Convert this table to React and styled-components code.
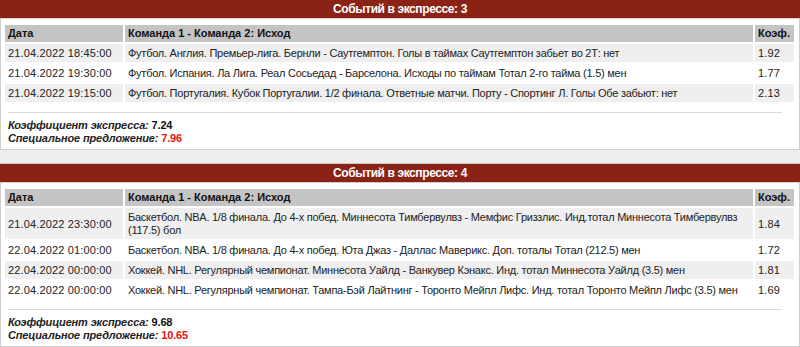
import React from 'react';
import styled, { createGlobalStyle } from 'styled-components';

const GlobalStyle = createGlobalStyle`
  html, body {
    margin: 0;
    padding: 0;
    background: #efefef;
  }
  body {
    font-family: "Liberation Sans", Arial, sans-serif;
    font-size: 11px;
    color: #222;
  }
`;

const Page = styled.div`
  width: 800px;
  display: flex;
  flex-direction: column;
  gap: 13px;
`;

const Block = styled.section`
  display: flex;
  flex-direction: column;
`;

const TitleBar = styled.div`
  height: 18px;
  line-height: 18px;
  background: #8a2315;
  color: #fff;
  font-weight: bold;
  font-size: 12px;
  letter-spacing: -0.4px;
  text-align: center;
  border-top: ${(p) => (p.$first ? 'none' : '1px solid #c8c8c8')};
`;

const Panel = styled.div`
  background: #fff;
  border: 1px solid #cfcfcf;
  padding: 4px 3px 4px 2px;
`;

const Table = styled.table`
  width: 100%;
  border-collapse: separate;
  border-spacing: 2px;
`;

const Th = styled.th`
  background: #c4c4c4;
  color: #111;
  font-weight: bold;
  text-align: left;
  padding: 2px 3px;
  line-height: 13px;
  width: ${(p) => p.$w || 'auto'};
`;

const Row = styled.tr`
  background: ${(p) => (p.$alt ? '#efefef' : '#fff')};
`;

const Td = styled.td`
  padding: 3px 3px 2px;
  line-height: 13px;
  vertical-align: middle;
  letter-spacing: ${(p) => (p.$text ? '-0.25px' : '0.15px')};
`;

const Rule = styled.div`
  height: 1px;
  background: #dcdcdc;
  margin: 8px 14px 6px 5px;
`;

const Summary = styled.div`
  padding-left: 5px;
  line-height: 13px;
  letter-spacing: -0.15px;
`;

const Label = styled.span`
  font-weight: bold;
  font-style: italic;
`;

const Value = styled.span`
  font-weight: bold;
  color: ${(p) => (p.$red ? '#e8120c' : '#111')};
`;

const expresses = [
  {
    count: 3,
    coef: '7.24',
    special: '7.96',
    events: [
      ['21.04.2022 18:45:00', 'Футбол. Англия. Премьер-лига. Бернли - Саутгемптон. Голы в таймах Саутгемптон забьет во 2Т: нет', '1.92'],
      ['21.04.2022 19:30:00', 'Футбол. Испания. Ла Лига. Реал Сосьедад - Барселона. Исходы по таймам Тотал 2-го тайма (1.5) мен', '1.77'],
      ['21.04.2022 19:15:00', 'Футбол. Португалия. Кубок Португалии. 1/2 финала. Ответные матчи. Порту - Спортинг Л. Голы Обе забьют: нет', '2.13'],
    ],
  },
  {
    count: 4,
    coef: '9.68',
    special: '10.65',
    events: [
      ['21.04.2022 23:30:00', 'Баскетбол. NBA. 1/8 финала. До 4-х побед. Миннесота Тимбервулвз - Мемфис Гриззлис. Инд.тотал Миннесота Тимбервулвз (117.5) бол', '1.84'],
      ['22.04.2022 01:00:00', 'Баскетбол. NBA. 1/8 финала. До 4-х побед. Юта Джаз - Даллас Маверикс. Доп. тоталы Тотал (212.5) мен', '1.72'],
      ['22.04.2022 00:00:00', 'Хоккей. NHL. Регулярный чемпионат. Миннесота Уайлд - Ванкувер Кэнакс. Инд. тотал Миннесота Уайлд (3.5) мен', '1.81'],
      ['22.04.2022 00:00:00', 'Хоккей. NHL. Регулярный чемпионат. Тампа-Бэй Лайтнинг - Торонто Мейпл Лифс. Инд. тотал Торонто Мейпл Лифс (3.5) мен', '1.69'],
    ],
  },
];

const Express = ({ data, first }) => (
  <Block>
    <TitleBar $first={first}>Событий в экспрессе: {data.count}</TitleBar>
    <Panel>
      <Table>
        <thead>
          <tr>
            <Th $w="112px">Дата</Th>
            <Th>Команда 1 - Команда 2: Исход</Th>
            <Th $w="33px">Коэф.</Th>
          </tr>
        </thead>
        <tbody>
          {data.events.map((e, i) => (
            <Row key={i} $alt={i % 2 === 0}>
              <Td>{e[0]}</Td>
              <Td $text>{e[1]}</Td>
              <Td>{e[2]}</Td>
            </Row>
          ))}
        </tbody>
      </Table>
      <Rule />
      <Summary>
        <Label>Коэффициент экспресса:</Label> <Value>{data.coef}</Value>
        <br />
        <Label>Специальное предложение:</Label> <Value $red>{data.special}</Value>
      </Summary>
    </Panel>
  </Block>
);

export default function App() {
  return (
    <>
      <GlobalStyle />
      <Page>
        {expresses.map((d, i) => (
          <Express key={d.count} data={d} first={i === 0} />
        ))}
      </Page>
    </>
  );
}
